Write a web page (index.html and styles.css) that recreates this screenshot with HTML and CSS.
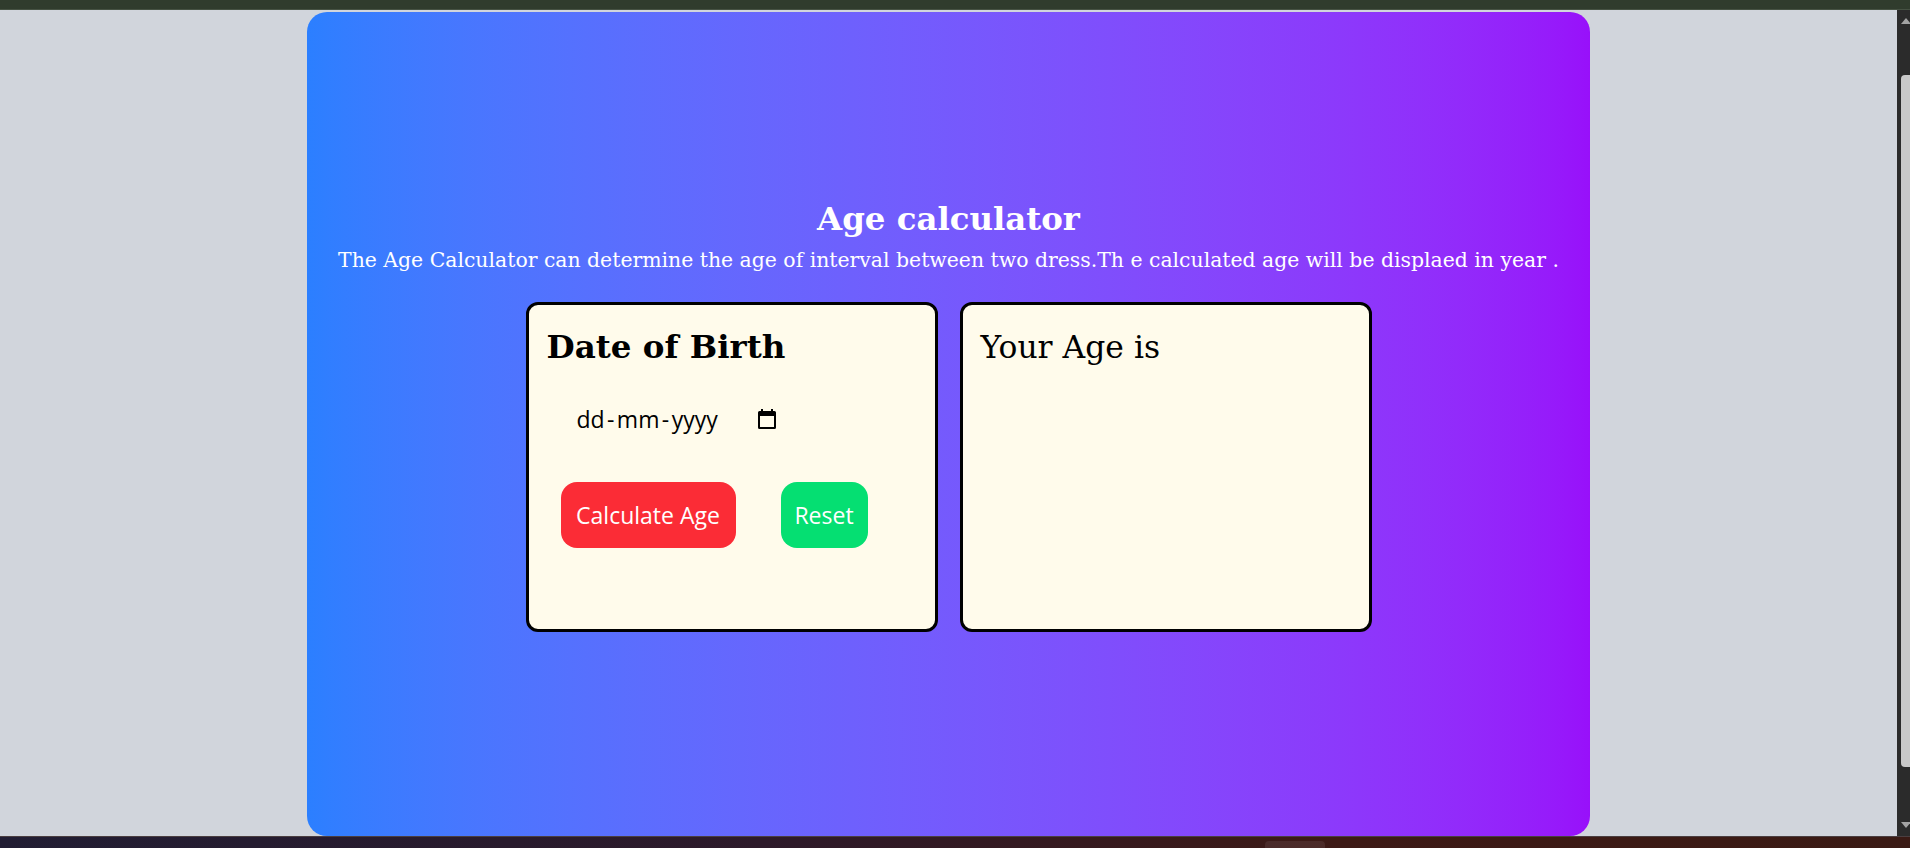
FILE: index.html
```html
<!DOCTYPE html>
<html lang="en">
<head>
<meta charset="utf-8">
<title>Age calculator</title>
<link rel="stylesheet" href="styles.css">
</head>
<body>
<div class="screen">
  <div class="topbar"></div>
  <div class="viewport">
    <main class="page">
      <section class="hero">
        <h1 class="title">Age calculator</h1>
        <p class="lead">The Age Calculator can determine the age of interval between two dress.Th e calculated age will be displaed in year .</p>
        <div class="cards">
          <div class="card">
            <h2 class="card-title">Date of Birth</h2>
            <div class="date-field">
              <span class="date-text">dd<span class="sep">-</span>mm<span class="sep">-</span>yyyy</span>
              <svg class="cal-icon" viewBox="0 0 20 20" width="20" height="20" aria-hidden="true"><path fill-rule="evenodd" d="M4 0h2v2h8V0h2v2h1.5A1.5 1.5 0 0 1 19 3.5v15a1.5 1.5 0 0 1-1.5 1.5h-15A1.5 1.5 0 0 1 1 18.5v-15A1.5 1.5 0 0 1 2.5 2H4zM3 7v11h14V7z" fill="#000"/></svg>
            </div>
            <div class="buttons">
              <button class="btn btn-calc">Calculate Age</button>
              <button class="btn btn-reset">Reset</button>
            </div>
          </div>
          <div class="card">
            <h2 class="card-result">Your Age is</h2>
          </div>
        </div>
      </section>
    </main>
    <div class="scrollbar">
      <div class="arrow arrow-up"></div>
      <div class="track"><div class="thumb"></div></div>
      <div class="arrow arrow-down"></div>
    </div>
  </div>
  <div class="taskbar"><div class="task-item"></div></div>
</div>
</body>
</html>
```
FILE: styles.css
```css
* { box-sizing: border-box; }
html, body { margin: 0; padding: 0; }
body { width: 1910px; height: 848px; overflow: hidden; background: #d1d5dc; }

.screen { display: flex; flex-direction: column; width: 1910px; height: 848px; }

.topbar {
  height: 10px;
  flex: none;
  background: #303c2d;
  border-bottom: 1px solid #465243;
}

.viewport { flex: 1; display: flex; min-height: 0; }

.page {
  flex: 1;
  background: #d1d5dc;
  padding: 2px 0 0 307px;
}

.hero {
  width: 1283px;
  height: 824px;
  border-radius: 20px;
  background: linear-gradient(to right in oklab, #2b7fff, #9810fa);
  display: flex;
  flex-direction: column;
  align-items: center;
  padding-top: 187px;
  color: #fff;
  font-family: "DejaVu Serif", Georgia, serif;
}

.title {
  margin: 0;
  font-size: 32.4px;
  line-height: 40px;
  font-weight: bold;
}

.lead {
  margin: 6px 0 0;
  font-size: 20.4px;
  line-height: 30px;
}

.cards {
  display: flex;
  gap: 22px;
  margin-top: 27px;
}

.card {
  width: 412px;
  height: 330px;
  background: #fffbeb;
  border: 3px solid #000;
  border-radius: 12px;
  padding: 20px 18px;
  color: #000;
}

.card-title {
  margin: 0;
  font-size: 32.5px;
  line-height: 44px;
  font-weight: bold;
}

.card-result {
  margin: 0;
  font-size: 31.4px;
  line-height: 44px;
  font-weight: normal;
}

.date-field {
  display: flex;
  align-items: center;
  margin: 33px 0 0 30px;
  height: 34px;
  font-family: "Open Sans", "Noto Sans", sans-serif;
  font-size: 23px;
}

.date-text { width: 180px; }
.sep { margin: 0 2.4px; }

.cal-icon { display: block; }

.buttons {
  display: flex;
  gap: 45px;
  margin: 46px 0 0 14px;
}

.btn {
  height: 66px;
  border: none;
  border-radius: 16px;
  color: #fff;
  font-family: "Open Sans", "Noto Sans", sans-serif;
  font-size: 23px;
  padding: 0;
}

.btn-calc { background: #fb2c36; width: 175px; }
.btn-reset { background: #05df72; width: 87px; }

.scrollbar {
  width: 13px;
  flex: none;
  background: #2b2b2b;
  display: flex;
  flex-direction: column;
  align-items: flex-end;
  padding: 8px 0 8px 4px;
}

.arrow { width: 0; height: 0; flex: none; border-left: 5px solid transparent; border-right: 5px solid transparent; margin-right: -1px; }
.arrow-up { border-bottom: 6px solid #a3a3a3; }
.arrow-down { border-top: 6px solid #a3a3a3; }

.track { flex: 1; width: 9px; padding: 51px 0 55px; }
.thumb { height: 100%; background: #c9c9c9; border-radius: 4px 0 0 4px; }

.taskbar {
  height: 12px;
  flex: none;
  background: linear-gradient(to right, #211d33, #2d1a2a 40%, #3d1a16 70%, #3a1a14);
  border-top: 1px solid #4a3e40;
  display: flex;
  padding-left: 1265px;
}

.task-item {
  width: 60px;
  height: 11px;
  margin-top: 4px;
  background: rgba(255,255,255,0.08);
  border-radius: 4px 4px 0 0;
}
```
